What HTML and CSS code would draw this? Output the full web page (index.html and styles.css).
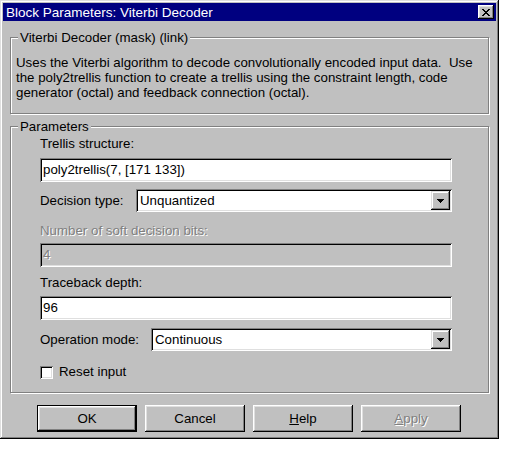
FILE: index.html
```html
<!DOCTYPE html>
<html>
<head>
<meta charset="utf-8">
<link rel="stylesheet" href="styles.css">
</head>
<body>
<div class="window">
  <div class="titlebar">
    <span class="title">Block Parameters: Viterbi Decoder</span>
    <span class="close"><svg width="8" height="7" viewBox="0 0 8 7" shape-rendering="crispEdges"><path fill="#000" d="M0 0h2v1H0zM6 0h2v1H6zM1 1h2v1H1zM5 1h2v1H5zM2 2h4v1H2zM3 3h2v1H3zM2 4h4v1H2zM1 5h2v1H1zM5 5h2v1H5zM0 6h2v1H0zM6 6h2v1H6z"/></svg></span>
  </div>
  <div class="body">
    <div class="group group-desc">
      <span class="legend">Viterbi Decoder (mask) (link)</span>
      <p class="desc">Uses the Viterbi algorithm to decode convolutionally encoded input data.&nbsp; Use<br>the poly2trellis function to create a trellis using the constraint length, code<br>generator (octal) and feedback connection (octal).</p>
    </div>
    <div class="group group-params">
      <span class="legend">Parameters</span>
      <div class="label l-trellis">Trellis structure:</div>
      <div class="field f-trellis">poly2trellis(7, [171 133])</div>
      <div class="row r-decision">
        <span class="row-label lab-decision">Decision type:</span>
        <div class="select">
          <span class="select-text">Unquantized</span>
          <span class="drop"><svg width="7" height="4" viewBox="0 0 7 4" shape-rendering="crispEdges"><path fill="#000" d="M0 0h7v1H0zM1 1h5v1H1zM2 2h3v1H2zM3 3h1v1H3z"/></svg></span>
        </div>
      </div>
      <div class="label disabled l-soft">Number of soft decision bits:</div>
      <div class="field field-disabled f-soft"><span class="disabled">4</span></div>
      <div class="label l-trace">Traceback depth:</div>
      <div class="field f-trace">96</div>
      <div class="row r-mode">
        <span class="row-label lab-mode">Operation mode:</span>
        <div class="select">
          <span class="select-text">Continuous</span>
          <span class="drop"><svg width="7" height="4" viewBox="0 0 7 4" shape-rendering="crispEdges"><path fill="#000" d="M0 0h7v1H0zM1 1h5v1H1zM2 2h3v1H2zM3 3h1v1H3z"/></svg></span>
        </div>
      </div>
      <div class="check-row">
        <span class="checkbox"></span>
        <span class="check-label">Reset input</span>
      </div>
    </div>
    <div class="buttons">
      <div class="btn btn-default"><span>OK</span></div>
      <div class="btn"><span>Cancel</span></div>
      <div class="btn"><span><u>H</u>elp</span></div>
      <div class="btn"><span class="disabled"><u>A</u>pply</span></div>
    </div>
  </div>
</div>
</body>
</html>
```
FILE: styles.css
```css
html, body {
  margin: 0;
  padding: 0;
  background: #fff;
}
body {
  font-family: "Liberation Sans", Arial, sans-serif;
  font-size: 13.3px;
  color: #000;
}
.window {
  width: 499px;
  height: 439px;
  box-sizing: border-box;
  padding: 3px;
  background: #c0c0c0;
  box-shadow: inset -1px -1px #000, inset 1px 1px #dfdfdf, inset -2px -2px #808080, inset 2px 2px #fff;
  display: flex;
  flex-direction: column;
}
.titlebar {
  height: 18px;
  flex: none;
  background: #000080;
  color: #fff;
  display: flex;
  align-items: center;
  justify-content: space-between;
  padding: 0 2px 0 3px;
  font-size: 13.5px;
}
.close {
  width: 16px;
  height: 14px;
  background: #c0c0c0;
  box-shadow: inset -1px -1px #000, inset 1px 1px #fff, inset -2px -2px #808080, inset 2px 2px #dfdfdf;
  display: flex;
  align-items: center;
  justify-content: center;
}
.close svg { display: block; }
.body {
  padding: 16px 7px 0 7px;
  display: flex;
  flex-direction: column;
}
.group {
  position: relative;
  box-sizing: border-box;
  border: 1px solid #808080;
  box-shadow: 1px 1px 0 #fff, inset 1px 1px 0 #fff;
}
.legend {
  position: absolute;
  top: -8px;
  left: 7px;
  padding: 0 2px;
  line-height: 16px;
  background: #c0c0c0;
}
.group-desc {
  height: 77px;
  padding: 17px 5px 0 5px;
}
.desc {
  margin: 0;
  line-height: 15px;
}
.group-params {
  margin-top: 12px;
  height: 267px;
  padding: 9px 0 0 29px;
  display: flex;
  flex-direction: column;
  align-items: flex-start;
}
.label {
  line-height: 16px;
}
.field {
  width: 412px;
  height: 24px;
  box-sizing: border-box;
  background: #fff;
  padding-left: 3px;
  line-height: 24px;
  box-shadow: inset 1px 1px #808080, inset -1px -1px #fff, inset 2px 2px #000, inset -2px -2px #dfdfdf;
}
.field-disabled { background: #c0c0c0; }
.disabled {
  color: #808080;
  text-shadow: 1px 1px 0 #fff;
}
.l-trellis { margin-top: 0; }
.f-trellis { margin-top: 6px; }
.row {
  display: flex;
  align-items: center;
  width: 412px;
  height: 23px;
}
.r-decision { margin-top: 7px; }
.lab-decision { width: 96px; flex: none; }
.lab-mode { width: 111px; flex: none; }
.select {
  flex: 1;
  height: 23px;
  box-sizing: border-box;
  background: #fff;
  display: flex;
  align-items: center;
  justify-content: space-between;
  padding: 2px 2px 2px 4px;
  box-shadow: inset 1px 1px #808080, inset -1px -1px #fff, inset 2px 2px #000, inset -2px -2px #dfdfdf;
}
.drop {
  width: 19px;
  height: 19px;
  background: #c0c0c0;
  box-shadow: inset -1px -1px #000, inset 1px 1px #dfdfdf, inset -2px -2px #808080, inset 2px 2px #fff;
  display: flex;
  align-items: center;
  justify-content: center;
}
.drop svg { display: block; }
.l-soft { margin-top: 11px; }
.f-soft { margin-top: 4px; }
.l-trace { margin-top: 8px; }
.f-trace { margin-top: 5px; }
.r-mode { margin-top: 8px; }
.check-row {
  margin-top: 13px;
  display: flex;
  align-items: center;
  gap: 6px;
  line-height: 16px;
}
.checkbox {
  width: 13px;
  height: 13px;
  box-sizing: border-box;
  background: #fff;
  box-shadow: inset 1px 1px #808080, inset -1px -1px #fff, inset 2px 2px #000, inset -2px -2px #dfdfdf;
}
.buttons {
  margin-top: 12px;
  padding-left: 27px;
  display: flex;
  gap: 8px;
}
.btn {
  width: 100px;
  height: 27px;
  box-sizing: border-box;
  background: #c0c0c0;
  display: flex;
  align-items: center;
  justify-content: center;
  box-shadow: inset -1px -1px #000, inset 1px 1px #fff, inset -2px -2px #808080, inset 2px 2px #dfdfdf;
}
.btn-default {
  box-shadow: inset 0 0 0 1px #000, inset -2px -2px #000, inset 2px 2px #fff, inset -3px -3px #808080, inset 3px 3px #dfdfdf;
}
```
